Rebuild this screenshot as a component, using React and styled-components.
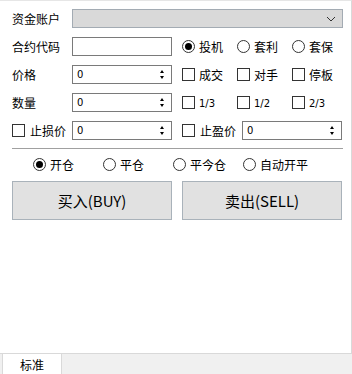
import React from 'react'
import styled, { createGlobalStyle } from 'styled-components'

const GlobalStyle = createGlobalStyle`
  body {
    margin: 0;
    font-family: "Noto Sans CJK SC", "Microsoft YaHei", sans-serif;
    font-size: 12px;
    color: #000;
  }
`

const Spin = () => (
  <SpinBox>
    <SpinValue>0</SpinValue>
    <SpinArrows>
      <ArrowUp />
      <ArrowDown />
    </SpinArrows>
  </SpinBox>
)

const Option = ({ type, checked, children }) => (
  <OptionItem>
    {type === 'radio' ? <Radio checked={checked} /> : <Check />}
    <OptionText>{children}</OptionText>
  </OptionItem>
)

const App = () => {
  return (
    <Page>
      <GlobalStyle />
      <Panel>
        <Row>
          <Label>资金账户</Label>
          <Select>
            <svg width="10" height="6" viewBox="0 0 10 6">
              <path d="M1 1 L5 5 L9 1" fill="none" stroke="#333" strokeWidth="1" />
            </svg>
          </Select>
        </Row>
        <Row>
          <Label>合约代码</Label>
          <TextBox />
          <Options>
            <Option type="radio" checked>投机</Option>
            <Option type="radio">套利</Option>
            <Option type="radio">套保</Option>
          </Options>
        </Row>
        <Row>
          <Label>价格</Label>
          <Spin />
          <Options>
            <Option>成交</Option>
            <Option>对手</Option>
            <Option>停板</Option>
          </Options>
        </Row>
        <Row>
          <Label>数量</Label>
          <Spin />
          <Options>
            <Option><Fraction>1/3</Fraction></Option>
            <Option><Fraction>1/2</Fraction></Option>
            <Option><Fraction>2/3</Fraction></Option>
          </Options>
        </Row>
        <Row>
          <CheckLabel>
            <Check />
            <span>止损价</span>
          </CheckLabel>
          <Spin />
          <Options>
            <CheckLabel>
              <Check />
              <span>止盈价</span>
            </CheckLabel>
            <Spin />
          </Options>
        </Row>
        <Divider />
        <ModeRow>
          <ModeItem><Radio checked /><span>开仓</span></ModeItem>
          <ModeItem><Radio /><span>平仓</span></ModeItem>
          <ModeItem><Radio /><span>平今仓</span></ModeItem>
          <ModeItem><Radio /><span>自动开平</span></ModeItem>
        </ModeRow>
        <ButtonRow>
          <ActionButton>买入(BUY)</ActionButton>
          <ActionButton>卖出(SELL)</ActionButton>
        </ButtonRow>
      </Panel>
      <TabBar>
        <Tab>标准</Tab>
      </TabBar>
    </Page>
  )
}

export default App

const Page = styled.div`
  width: 352px;
  height: 374px;
  display: flex;
  flex-direction: column;
  background: #f0f0f0;
`
const Panel = styled.div`
  flex: 1;
  background: #fff;
  border-top: 1px solid #e6e6e6;
  border-right: 1px solid #d9d9d9;
  border-bottom: 1px solid #d9d9d9;
  padding: 8px 0 0 12px;
`
const Row = styled.div`
  display: flex;
  align-items: center;
  height: 19px;
  margin-bottom: 9px;
`
const Label = styled.div`
  width: 60px;
  flex-shrink: 0;
  line-height: 19px;
`
const Select = styled.div`
  box-sizing: border-box;
  width: 271px;
  height: 19px;
  background: #d9d9d9;
  border: 1px solid #a3abb3;
  display: flex;
  align-items: center;
  justify-content: flex-end;
  padding-right: 6px;
`
const TextBox = styled.div`
  box-sizing: border-box;
  width: 100px;
  height: 19px;
  border: 1px solid #7a7a7a;
  background: #fff;
`
const SpinBox = styled.div`
  box-sizing: border-box;
  width: 100px;
  height: 19px;
  border: 1px solid #7a7a7a;
  background: #fff;
  display: flex;
  align-items: center;
  justify-content: space-between;
  padding: 0 7px 0 4px;
`
const SpinValue = styled.span`
  font-family: "DejaVu Sans", sans-serif;
  font-size: 10px;
`
const SpinArrows = styled.div`
  display: flex;
  flex-direction: column;
  gap: 3px;
`
const ArrowUp = styled.div`
  width: 0;
  height: 0;
  border-left: 2.5px solid transparent;
  border-right: 2.5px solid transparent;
  border-bottom: 3px solid #000;
`
const ArrowDown = styled.div`
  width: 0;
  height: 0;
  border-left: 2.5px solid transparent;
  border-right: 2.5px solid transparent;
  border-top: 3px solid #000;
`
const Options = styled.div`
  display: flex;
  align-items: center;
  margin-left: 10px;
`
const OptionItem = styled.div`
  width: 55px;
  display: flex;
  align-items: center;
  gap: 4px;
`
const OptionText = styled.span`
  line-height: 19px;
`
const Fraction = styled.span`
  font-family: "DejaVu Sans", sans-serif;
  font-size: 10px;
`
const Radio = styled.span`
  box-sizing: border-box;
  width: 13px;
  height: 13px;
  border: 1px solid #333;
  border-radius: 50%;
  display: inline-flex;
  align-items: center;
  justify-content: center;
  flex-shrink: 0;
  &::after {
    content: "";
    width: 7px;
    height: 7px;
    border-radius: 50%;
    background: ${p => (p.checked ? '#000' : 'transparent')};
  }
`
const Check = styled.span`
  box-sizing: border-box;
  width: 13px;
  height: 13px;
  border: 1px solid #333;
  background: #fff;
  flex-shrink: 0;
`
const CheckLabel = styled.div`
  width: 60px;
  flex-shrink: 0;
  display: flex;
  align-items: center;
  gap: 5px;
`
const Divider = styled.div`
  width: 331px;
  height: 1px;
  background: #a0a0a0;
  margin-top: -1px;
`
const ModeRow = styled.div`
  display: flex;
  align-items: center;
  height: 16px;
  margin-top: 7px;
  padding-left: 21px;
`
const ModeItem = styled.div`
  width: 70px;
  display: flex;
  align-items: center;
  gap: 4px;
`
const ButtonRow = styled.div`
  display: flex;
  gap: 10px;
  margin-top: 9px;
`
const ActionButton = styled.div`
  box-sizing: border-box;
  width: 160px;
  height: 39px;
  background: #e1e1e1;
  border: 1px solid #a9b2ba;
  display: flex;
  align-items: center;
  justify-content: center;
  font-size: 15px;
`
const TabBar = styled.div`
  height: 20px;
  display: flex;
  padding-left: 2px;
`
const Tab = styled.div`
  width: 58px;
  background: #fff;
  border-left: 1px solid #d9d9d9;
  border-right: 1px solid #d9d9d9;
  display: flex;
  align-items: center;
  justify-content: center;
`
